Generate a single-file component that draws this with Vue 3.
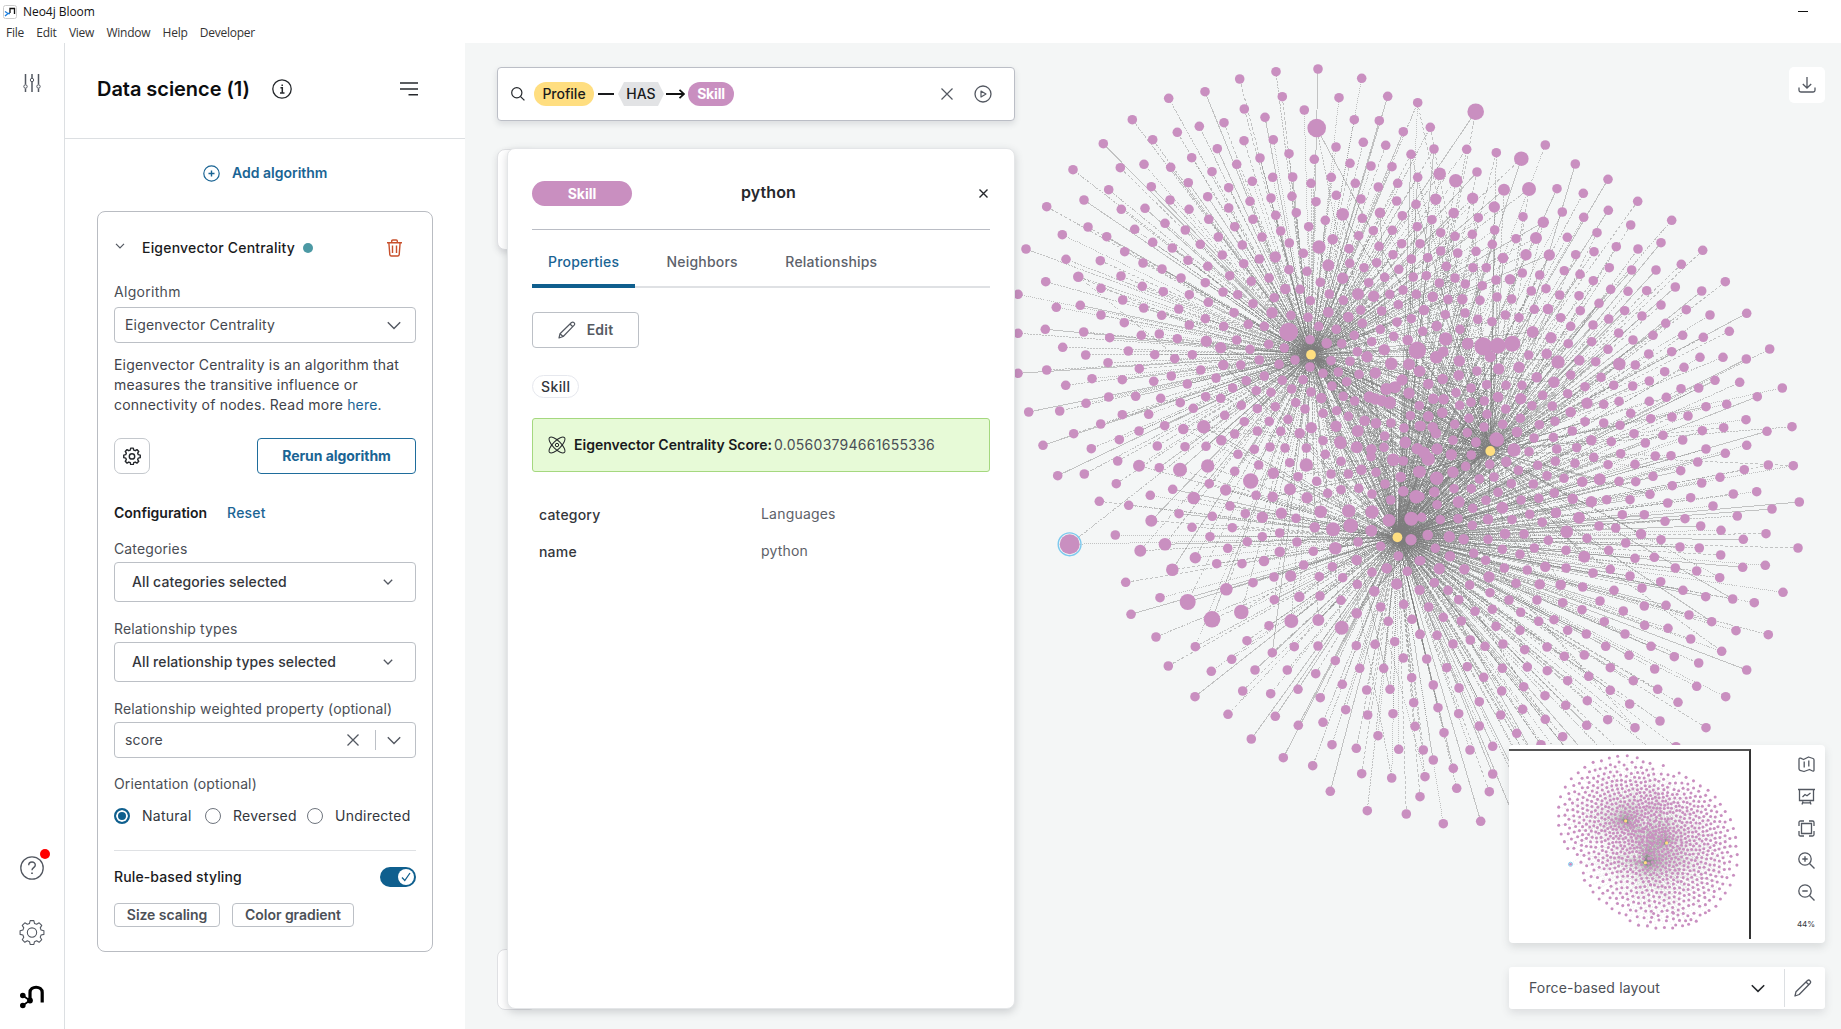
<script setup>
// Node positions, grouped by canvas region. Each region stores its origin and
// its nodes as "x y [radius]" in thirds of a pixel.
const regions = [
  {
    ox: 1010,
    oy: 50,
    nodes: `924 57,798 65,689 87,1055 85,585 125,476 145,817 140,987 143,1133 139,1223 158,703 177,883 180,765 202,367 209,642 218,1033 209,1108 212,568 229,502 247,920 234 28,1180 245,428 269,702 272,790 269,280 281,1060 277,1127 286,978 291,622 296,837 311,1203 313,545 323,750 324,913 328,331 353,402 343,482 352,680 343,1020 340,1083 348,1146 350,189 359,606 365,788 382,848 381,964 382,1223 382,727 394,535 398,903 400,1036 400,1163 400,424 410,296 419,656 413,1105 411,593 440,783 444,846 439,979 436,222 450,480 450,720 454,918 455,1053 447,1160 453,110 470,1218 463,405 475,334 478,656 474,537 478,797 496,859 488,1110 488 16,998 493 19,1177 497,1057 505,596 508,729 508,946 511,465 520,234 531,374 538,674 530,896 530,1222 530,526 540,812 543,1090 542,1147 541,157 554,290 560,756 561,625 561,1046 557,968 568 16,428 577,571 583,697 585,838 579,1107 589,927 591 20,1175 581,1230 581,48 597,487 594,344 605,1017 596,880 610,637 615,1149 614,796 621 17,168 628,271 632,534 631,748 627,1204 627,399 639,701 641,1019 640,1100 638,955 646 18,593 649,456 657,837 659,1062 653,1166 658,891 664,205 680 16,333 678,513 684,659 677,777 684,998 685 17,1124 682,1210 681,107 695,724 694,586 698,931 697,1076 698,397 709,273 715,826 717 16,460 725,639 726,870 718,1179 720,958 732,1044 732 18,24 733,538 734,683 734,793 743,1139 733,1091 739 17,1219 733,338 750,901 752,1000 751,595 757,729 761,139 772,211 766,401 774,506 777,1165 764,1052 780,1115 783,273 795,455 796,672 788,786 788 17,843 796,955 787 16,1015 801 16,894 802,1204 806,343 818,586 806,1161 816,538 825,641 829,715 823,763 829,926 829,1057 820,106 838,24 850,836 846 28,979 838,1111 838,221 846,394 856,448 852,299 863,502 866,1033 856,1151 859,589 874 17,680 870,776 883,900 869,950 880 16,995 881,1085 875,1193 870 16,632 893 17,158 892,720 898,823 894,1123 899 17,355 903,1042 905,1071 920 17,1222 901 26,227 915,434 914,494 926,547 914,748 930,855 930,963 932,1020 934,294 938,640 945 16,692 945,807 943,1144 941 19,1197 943 18,900 951,24 970,110 960,388 956,572 960,939 970,985 966,1047 973,1096 969 17,1228 964 17,484 978,763 978,246 986,337 989,431 994,618 984,709 992,817 991,879 989,1010 995,1176 990 17,532 1002,167 1006,966 1008,668 1014,739 1022,783 1027,845 1017,903 1026,1129 1017 18,1155 1012 18,1197 1030 17,296 1041,377 1039,452 1045,587 1040,632 1045,934 1044 16,1000 1039,1034 1053,1078 1041 17,1096 1047 17,1116 1052 17,1139 1058 19,228 1060,511 1058,857 1058,550 1075,694 1066,742 1076,796 1070,885 1077,1228 1067,56 1086,149 1083,337 1094,416 1093,644 1096,939 1090,980 1082,1015 1099,1201 1097,272 1122,703 1115,778 1114,834 1108,1064 1112 16,1098 1120 16,1143 1119,464 1127,520 1137 16,581 1130 20,742 1143,812 1144,904 1133 17,978 1129 17,1043 1143 18,1182 1134,1228 1128,191 1151,387 1143,674 1152,869 1150 16,1124 1158,328 1169,634 1171 16,939 1172,990 1176 18,1186 1175 16`
  },
  {
    ox: 1420,
    oy: 50,
    nodes: `167 185 25,31 232,42 297,140 298,229 308,376 285,304 326 22,466 342,171 366,59 371 19,564 388,107 392 20,252 419 18,327 417 21,411 416,490 430,653 454,158 445 17,47 448 17,223 471 17,101 489 16,427 486,565 481,175 503,309 500,491 502,36 509,755 511,370 517 17,632 525,62 548,224 540,157 553,531 548,105 559,442 562,288 566,348 564 18,217 583,723 578,589 590,62 603,168 604,522 605,654 597,848 601,113 609,318 614 17,388 615 17,467 614,23 623,249 624 16,784 643,79 649,159 653,199 653,568 653,433 662,635 660,708 660,19 677,307 669,480 673,359 675,105 684,228 690,270 688 16,520 692,916 695,58 699,136 702,187 707,378 716,334 723,572 718,766 711,624 724,680 722,845 723,38 740 16,84 748,127 748 16,180 751,231 741,275 747,419 735,477 737,537 760,723 765,12 780 16,343 778,384 777 16,799 779,481 782,614 782,76 794,135 789,256 795,297 803,422 803,566 807,666 798,870 795,980 790,173 808,216 815,519 825,737 820,50 828 16,452 829,120 838,8 844,338 846 18,928 844,596 849,699 856,788 856,850 862,393 863 17,639 870,77 867 20,143 881 18,190 889 27,233 887 24,277 881 24,445 881,515 875,211 920 17,49 922 19,70 905 16,564 898,1049 897,686 912,755 905,326 915,380 911 16,118 933 17,414 936 20,478 931 16,527 935,909 922,840 922,979 927,598 942 19,646 945,171 963,236 957 17,297 952 17,792 952,116 976 16,734 965,2 964,452 975,350 982 16,543 982,25 1002 16,68 987 16,200 1004,258 1006,306 1006,402 997 17,688 993,885 991,959 997,153 1014,581 1006,638 1008,495 1010,783 1016,836 1014,1087 1014,108 1028,443 1031,368 1036,1012 1040,234 1041 16,302 1046 17,40 1046 16,71 1048 16,153 1057,193 1053,739 1042,688 1054,597 1054,551 1063,501 1060 17,920 1063,119 1066,397 1068,336 1067,257 1077,858 1070,67 1088 16,201 1093,452 1086 16,632 1090,25 1099 16,147 1105,301 1105,692 1106,756 1101,804 1098,978 1109,495 1115,551 1119,405 1114,104 1123,600 1126,248 1123,358 1124,38 1132 16,192 1131,1116 1130,911 1133,1041 1144,847 1142,457 1143,48 1150 16,142 1148,291 1146 16,642 1151,729 1156,342 1164,400 1162,229 1168 21,99 1171,168 1176,514 1171 16,574 1175,788 1170,676 1179,2 1128 16`
  },
  {
    ox: 1010,
    oy: 440,
    nodes: `99 16,244 26,442 18,525 20,588 19,733 28,780 21,825 24,889 24,992 10 18,1040 22 18,1084 28 16,1122 22,1186 8 17,1222 26 17,684 43,946 43,1083 50,323 63,387 77 18,448 83,593 78 20,746 75,839 68,889 75 20,993 64,1150 59 19,1180 63,510 89 21,674 94,790 100 17,963 102,1015 102,1054 89 16,1098 97,1227 95 18,143 107,223 102,864 110,1172 111 16,722 123 23,920 124,319 131,598 131,1125 132,840 148 18,488 148,647 150 17,953 160,993 149,1046 145,1086 162,1180 154 16,421 166,738 166,788 170 16,551 174 19,891 173 17,1142 180,1218 170 20,268 184,356 196,660 198,1016 213 20,1086 216 20,932 215 19,507 221,706 221,814 220 17,607 229,757 232 17,858 235,424 242 18,1137 241 19,1204 236 21,546 262,667 263,914 262 16,969 268 21,1022 257 22,1084 272 18,316 285,600 290,757 290,809 279,179 313 30,465 313 19,712 305,861 306,1044 306,1203 299 17,391 332 18,653 325,809 335 16,910 334,976 325 19,1112 319,556 353 17,1165 348,620 371,696 371,762 363 16,1040 360 16,1228 362,487 389 19,881 375,967 380,1130 385 16,347 427,792 411,842 408 17,928 410,998 413,1086 397,1192 394,729 428,1042 433,1160 432 17,649 448 19,1093 454 16,1228 450,450 473,793 479,868 470 16,930 468,993 481,533 486 24,1181 493,1112 501,694 516 22,363 523,1040 520 16,606 538 25,844 543 21,925 540 18,1206 538,777 557,1135 544,995 563 21,438 591,711 602,1154 605,1230 583,556 620,853 620,924 618,1039 617,1095 613,787 638,665 658,976 662,1180 654,475 678,604 694,735 690,832 690,917 701,1049 685,1121 685,1205 713,698 753,997 733,864 748,1070 750,1140 748,782 761,555 770,931 773,1211 788,654 823,796 829,1007 809,1073 825,1149 821,865 856,939 847,1215 859,1104 887,724 897,966 914,1039 925,1166 928,820 953,908 977,1055 1001,1145 1014,961 1054,1072 1112,1189 1122`
  },
  {
    ox: 1420,
    oy: 440,
    nodes: `980 16,51 27 17,168 8,232 0 20,282 30 20,327 35,410 27,470 23,858 27,916 40,94 44 17,25 57 20,12 38 18,154 45,521 52,602 41,706 48,753 47,833 66,209 73,259 65 16,406 64,465 70,353 76,137 79,564 74,645 73,1045 75,1120 77,0 95 18,99 97 17,295 91,973 89,782 92,50 115 20,222 111,381 107,178 117,432 115,699 109,900 112,487 125 16,539 118 18,597 124,647 125,274 131,340 132,757 137,845 129,102 146,154 146,43 156 16,234 157,403 159,690 163,940 162,1010 155,0 170,116 186 18,198 181,303 180,356 175,458 176 16,514 185 17,560 179,630 179,812 173,743 189,879 198,1138 186,51 194,158 205,247 203 18,1056 207,408 218 16,329 223,607 224,673 224,952 228,5 232,61 239,114 236,204 238 16,276 239,477 233 18,795 236,367 247,735 244,537 258,842 258,587 264,157 256,903 271,440 275 19,255 281 16,312 282,663 282 16,23 285 16,88 290 17,131 298 16,204 298,385 301,501 295,1038 281,723 299,970 298,617 309,1134 324,46 325,247 328,343 324,438 331,566 331,780 321,838 324,300 343,90 349 16,161 340,493 350 18,902 345,703 352,645 355,2 362,197 361,1036 376,968 382,766 384,58 386 17,133 388 16,253 384,322 390,376 380 16,438 384,571 388,830 393,519 399,207 411 17,630 408,899 413,43 428,722 425,149 435,288 430,359 433 16,422 434 16,488 441,84 451,666 444,582 451,789 451,0 450,210 458,1089 457,857 470,116 479,267 480,351 480,540 483,428 488,938 477,1003 488,26 501,217 508,486 509,673 498,738 496,610 513,165 514,302 517,70 532,807 525,124 543,356 544,402 539,553 545,875 545,228 559,674 556,744 565,443 571,948 572,300 571,1045 584,0 583,51 586,499 582,615 582,812 597,151 600,99 612,249 612,195 619,381 621,557 619,693 619,314 629,905 634,20 657,433 649,493 645,627 646,763 650,836 669,80 683,142 680,247 685,322 681,571 683,704 687,980 690,382 692,191 712,506 709,443 722,640 722,40 735,117 744,311 740,830 739,713 748,245 753,571 751,375 767,502 782,917 770,178 785,774 787,437 796,629 792,54 803,308 808,116 821,242 825,376 838,563 839,720 843,178 858,500 856,645 863,858 863,72 878,290 880,428 890,10 930,150 930,218 919,363 914,768 920,290 942,218 1002,110 1045,208 1055,70 1151,182 1144,15 1010,0 1070,40 960,100 985`
  },
  {
    // Rows that sit below the overview card
    ox: 1510,
    oy: 750,
    nodes: `30 25,90 50,160 30,220 60,300 25,380 50,450 20,30 100,110 120,190 125,260 110,330 130,60 180,150 190,230 170,20 220`
  }
]

const hubs = [
  { x: 1311, y: 354.7 },
  { x: 1490.3, y: 451 },
  { x: 1397.4, y: 537.3 }
]

const nodes = []
for (const region of regions) {
  for (const entry of region.nodes.split(',')) {
    const parts = entry.trim().split(' ').map(Number)
    nodes.push({
      x: +(region.ox + parts[0] / 3).toFixed(1),
      y: +(region.oy + parts[1] / 3).toFixed(1),
      r: +((parts[2] || 14.4) / 3).toFixed(1)
    })
  }
}

function hubsFor(node, i) {
  const h = (i * 7919) % 100
  if (node.r > 5.2) {
    if (node.x < 1240 && node.y > 430) return [0, 2]
    if (node.x > 1400 && node.y < 330) return h < 50 ? [0, 1] : [0, 2]
    return h < 60 ? [0, 1, 2] : [1, 2]
  }
  const dx = node.x - 1311
  const dy = node.y - 355
  if (dx < 0 && dy < 110 + dx * -0.12) return [0]
  if (dy < 0 && dx < 95) return [0]
  if (node.y > 545 || node.x < 1330) return h < 8 ? [2, 0] : [2]
  if (node.x > 1500) return node.y > 430 ? (h < 12 ? [1, 2] : [2]) : h < 45 ? [1] : [2]
  return h < 40 ? [0, 2] : h < 60 ? [1, 2] : h < 75 ? [0, 1, 2] : [0, 1]
}

const patterns = [[], [], [], []]
nodes.forEach((node, i) => {
  for (const k of hubsFor(node, i)) {
    patterns[(i + k) % 4].push({ a: node, b: hubs[k] })
  }
})
const dashes = ['none', '2 1', '3 2', '1 1']
const edgeLayers = patterns.map((edges, i) => ({ edges, dash: dashes[i] }))
const miniPath = patterns
  .flat()
  .map((e) => `M${e.a.x} ${e.a.y}L${e.b.x} ${e.b.y}`)
  .join('')

const menus = ['File', 'Edit', 'View', 'Window', 'Help', 'Developer']
const orientations = ['Natural', 'Reversed', 'Undirected']
const gearPath =
  'M10.3 1.5h3.4l.6 2.6 2 .8 2.3-1.4 2.4 2.4-1.4 2.3.8 2 2.6.6v3.4l-2.6.6-.8 2 1.4 2.3-2.4 2.4-2.3-1.4-2 .8-.6 2.6h-3.4l-.6-2.6-2-.8-2.3 1.4L3 19.100l1.400-2.300-.8-2L1 14.200v-3.400l2.600-.6.8-2L3 5.900l2.400-2.400 2.300 1.400 2-.8z'
</script>

<template>
  <div class="window">
    <header class="chrome">
      <div class="titlebar">
        <svg class="app-icon" viewBox="0 0 14 14">
          <rect x=".5" y=".5" width="13" height="13" rx="2" fill="#fff" stroke="#ccc" />
          <path d="M7 8V3.500h4.500V9" fill="none" stroke="#111" stroke-width="1.300" />
          <path d="M2 6.500l3 2-3 2.500M4.500 8.500H7" fill="none" stroke="#1b7fe0" stroke-width="1.300" />
        </svg>
        <span>Neo4j Bloom</span>
        <i class="minimise"></i>
      </div>
      <nav class="menubar"><span v-for="m in menus" :key="m">{{ m }}</span></nav>
    </header>

    <div class="body">
      <aside class="rail">
        <svg class="ic sliders" width="18" height="20" viewBox="0 0 18 20">
          <path d="M2.500 1v10.500M2.500 15.500V19M9 1v4M9 9v10M15.500 1v10.500M15.500 15.500V19" stroke-width="1.500" />
          <circle cx="2.500" cy="13.500" r="1.700" /><circle cx="9" cy="7" r="1.700" /><circle cx="15.500" cy="13.500" r="1.700" />
        </svg>
        <div class="help">
          <svg class="ic" width="24" height="24" viewBox="0 0 24 24">
            <circle cx="12" cy="12" r="11.200" stroke-width="1.300" />
            <path d="M8.700 9.300C8.700 5 15.300 5 15.300 9c0 2.700-3.300 2.600-3.300 5.300" stroke-width="1.400" />
            <path d="M12 16.400v1.600" stroke-width="1.700" />
          </svg>
          <i class="alert"></i>
        </div>
        <svg class="ic rail-gear" width="26" height="26" viewBox="0 0 24 24">
          <path :d="gearPath" stroke-width="1" stroke-linejoin="round" /><circle cx="12" cy="12.500" r="4.300" stroke-width="1" />
        </svg>
        <svg class="logo" width="24" height="24" viewBox="0 0 24 24">
          <path d="M10 15V7.500C10 .5 22.200.5 22.200 7.500V17.500" fill="none" stroke="#000" stroke-width="3.200" />
          <path d="M2.800 10.500l7 5-7 5" fill="none" stroke="#000" stroke-width="1.800" />
          <circle cx="2.800" cy="10.500" r="2.800" /><circle cx="2.800" cy="20.500" r="2.800" /><circle cx="10" cy="15.500" r="2.900" />
        </svg>
      </aside>

      <section class="sidebar">
        <div class="side-head">
          <h1>Data science (1)</h1>
          <svg class="ic dark info" width="20" height="20" viewBox="0 0 20 20">
            <circle cx="10" cy="10" r="9.200" stroke-width="1.300" />
            <path d="M8.500 8.800h1.800V14M8 14h4.500M10.200 5.500v1.600" stroke-width="1.500" />
          </svg>
          <svg class="ic dark lines" width="18" height="14" viewBox="0 0 18 14">
            <path d="M0 1h18M0 7h18M8.500 12.800H18" stroke-width="1.500" />
          </svg>
        </div>

        <button class="add">
          <svg class="ic" width="17" height="17" viewBox="0 0 17 17">
            <circle cx="8.500" cy="8.500" r="7.700" stroke-width="1.200" /><path d="M8.500 5.500v6M5.500 8.500h6" stroke-width="1.400" />
          </svg>
          <span>Add algorithm</span>
        </button>

        <article class="card">
          <div class="card-head">
            <svg class="ic" width="10" height="6" viewBox="0 0 10 6"><path d="M1 .8l4 4 4-4" stroke-width="1.200" /></svg>
            <strong>Eigenvector Centrality</strong>
            <i class="status"></i>
            <svg class="trash" width="15" height="18" viewBox="0 0 15 18">
              <path d="M0 3.700h15M4.700 3.500V2Q4.700 1 5.800 1h3.400q1.100 0 1.100 1v1.500M1.900 4l.9 11.600q.2 1.400 1.500 1.400h6.400q1.300 0 1.500-1.400L13.100 4M5.500 6.500V14M9.500 6.500V14" />
            </svg>
          </div>

          <label class="lbl first">Algorithm</label>
          <div class="select">
            <span>Eigenvector Centrality</span>
            <svg class="ic" width="14" height="9" viewBox="0 0 14 9"><path d="M.8 1.200L7 7.400l6.200-6.200" stroke-width="1.400" /></svg>
          </div>
          <p class="desc">Eigenvector Centrality is an algorithm that<br />measures the transitive influence or<br />connectivity of nodes. Read more <a>here</a>.</p>

          <div class="actions">
            <button class="gear-btn">
              <svg class="ic dark" width="18" height="18" viewBox="0 0 24 24">
                <path :d="gearPath" stroke-width="1.900" stroke-linejoin="round" /><circle cx="12" cy="12.500" r="3.600" stroke-width="1.900" />
              </svg>
            </button>
            <button class="rerun">Rerun algorithm</button>
          </div>

          <div class="config"><strong>Configuration</strong><a>Reset</a></div>

          <label class="lbl cat">Categories</label>
          <div class="dropdown">
            <span>All categories selected</span>
            <svg class="ic" width="10" height="6" viewBox="0 0 10 6"><path d="M.8.8L5 5 9.200.8" stroke-width="1.300" /></svg>
          </div>
          <label class="lbl">Relationship types</label>
          <div class="dropdown">
            <span>All relationship types selected</span>
            <svg class="ic" width="10" height="6" viewBox="0 0 10 6"><path d="M.8.8L5 5 9.200.8" stroke-width="1.300" /></svg>
          </div>
          <label class="lbl">Relationship weighted property (optional)</label>
          <div class="select">
            <span>score</span>
            <svg class="ic" width="12" height="12" viewBox="0 0 12 12"><path d="M.5.5l11 11M11.500.5l-11 11" stroke-width="1.300" /></svg>
            <i class="bar"></i>
            <svg class="ic" width="14" height="9" viewBox="0 0 14 9"><path d="M.8 1.200L7 7.400l6.200-6.200" stroke-width="1.400" /></svg>
          </div>

          <label class="lbl orient">Orientation (optional)</label>
          <div class="radios">
            <span v-for="(o, i) in orientations" :key="o" class="radio" :class="{ on: i === 0 }"><i></i>{{ o }}</span>
          </div>

          <div class="rule-row">
            <strong>Rule-based styling</strong>
            <div class="toggle">
              <b><svg width="10" height="10" viewBox="0 0 10 10"><path d="M1 5.500l2.800 3L9 1" /></svg></b>
            </div>
          </div>
          <div class="chips"><span class="chip size">Size scaling</span><span class="chip">Color gradient</span></div>
        </article>
      </section>

      <main class="canvas">
        <svg class="graph" width="1376" height="986" viewBox="465 43 1376 986">
          <g v-for="(layer, i) in edgeLayers" :key="i" class="edges" :stroke-dasharray="layer.dash">
            <line v-for="(e, j) in layer.edges" :key="j" :x1="e.a.x" :y1="e.a.y" :x2="e.b.x" :y2="e.b.y" />
          </g>
          <g class="nodes"><circle v-for="(n, i) in nodes" :key="i" :cx="n.x" :cy="n.y" :r="n.r" /></g>
          <circle cx="1069.600" cy="544.300" r="11.400" class="ring" />
          <circle v-for="h in hubs" :key="h.x" :cx="h.x" :cy="h.y" r="4.900" class="hub" />
        </svg>

        <div class="left-col">
          <div class="search">
            <svg class="ic dark" width="14" height="14" viewBox="0 0 14 14"><circle cx="5.800" cy="5.800" r="5.100" stroke-width="1.200" /><path d="M9.600 9.600l3.800 3.800" stroke-width="1.300" /></svg>
            <span class="pill profile">Profile</span>
            <i class="dash"></i>
            <span class="hex">HAS</span>
            <svg class="arrow" width="19" height="10" viewBox="0 0 19 10"><path d="M0 5h18M13.500.8L18 5l-4.500 4.200" /></svg>
            <span class="pill skill">Skill</span>
            <svg class="ic clear" width="12" height="12" viewBox="0 0 12 12"><path d="M.5.5l11 11M11.500.5l-11 11" stroke-width="1.200" /></svg>
            <svg class="ic play" width="18" height="18" viewBox="0 0 18 18"><circle cx="9" cy="9" r="8" stroke-width="1.300" /><path d="M7 6l5 3-5 3z" stroke-width="1.200" stroke-linejoin="round" /></svg>
          </div>

          <div class="stack">
            <div class="sheet top"></div>
            <div class="sheet bottom"></div>
            <section class="inspector">
              <div class="ins-head">
                <span class="badge">Skill</span>
                <h2>python</h2>
                <svg class="ic dark" width="9" height="9" viewBox="0 0 9 9"><path d="M.5.5l8 8M8.500.5l-8 8" stroke-width="1.400" /></svg>
              </div>
              <div class="tabs">
                <span class="tab active">Properties</span><span class="tab">Neighbors</span><span class="tab">Relationships</span>
              </div>
              <button class="edit">
                <svg class="ic" width="18" height="18" viewBox="0 0 18 18"><path d="M1 17l1-4.300L13.500 1.500q1.400-1 2.500.2 1.200 1.200.2 2.500L5.200 15.500zM12 3l3 3M2 12.700l3 2.800" stroke-width="1.200" stroke-linejoin="round" /></svg>
                <span>Edit</span>
              </button>
              <span class="tag">Skill</span>
              <div class="score">
                <svg class="ic dark" width="18" height="18" viewBox="0 0 18 18" stroke-width="1">
                  <ellipse cx="9" cy="9" rx="10.500" ry="4" transform="rotate(45 9 9)" /><ellipse cx="9" cy="9" rx="10.500" ry="4" transform="rotate(-45 9 9)" /><circle cx="9" cy="9" r="1.700" />
                </svg>
                <strong>Eigenvector Centrality Score:</strong><span>0.05603794661655336</span>
              </div>
              <dl>
                <dt>category</dt><dd>Languages</dd>
                <dt>name</dt><dd>python</dd>
              </dl>
            </section>
          </div>
        </div>

        <div class="right-col">
          <button class="download">
            <svg class="ic" width="18" height="18" viewBox="0 0 18 18"><path d="M9 1v11M4.800 8l4.200 4 4.200-4M1 11.500v2.700q0 1.800 1.800 1.800h12.400q1.800 0 1.800-1.800v-2.700" stroke-width="1.300" /></svg>
          </button>

          <div class="overview">
            <svg class="mini" viewBox="800.500 48.600 1050.300 822.800">
              <path :d="miniPath" class="mini-edges" />
              <g class="nodes"><circle v-for="(n, i) in nodes" :key="i" :cx="n.x" :cy="n.y" r="6.700" /></g>
              <circle cx="1069.600" cy="544.300" r="9" class="mini-ring" />
              <circle v-for="h in hubs" :key="h.x" :cx="h.x" :cy="h.y" r="7" class="hub" />
            </svg>
            <div class="tools">
              <svg class="ic" width="17" height="17" viewBox="0 0 17 17"><path d="M1 3.500q0-1.800 1.700-1.300L5.500 3.500l5-2.500L15 2.500q1 .4 1 1.500v10q0 1.500-1.500 1l-3-1.500-5.500 2L2 14.300q-1-.3-1-1.500zM6.200 5.500v6M10.800 4.500v6" stroke-width="1.300" stroke-linejoin="round" /></svg>
              <svg class="ic" width="17" height="17" viewBox="0 0 17 17"><path d="M0 1.500h17M1.500 1.500V12.500h14V1.500M5 13.500L4 16.500M12 13.500l1 3M4.500 14.800h8M4.500 9L7 6.500l2 1.200L12.500 5" stroke-width="1.300" /></svg>
              <svg class="ic" width="17" height="17" viewBox="0 0 17 17"><path d="M3.500 3.500h10v10h-10zM1 6V2.500Q1 1 2.500 1H6M11 1h3.500Q16 1 16 2.500V6M16 11v3.500q0 1.500-1.500 1.500H11M6 16H2.500Q1 16 1 14.500V11" stroke-width="1.300" /></svg>
              <svg class="ic" width="17" height="17" viewBox="0 0 17 17"><circle cx="7" cy="7" r="6.200" stroke-width="1.300" /><path d="M11.500 11.500l5 5M7 4.300v5.400M4.300 7h5.400" stroke-width="1.400" /></svg>
              <svg class="ic" width="17" height="17" viewBox="0 0 17 17"><circle cx="7" cy="7" r="6.200" stroke-width="1.300" /><path d="M11.500 11.500l5 5M4.300 7h5.400" stroke-width="1.400" /></svg>
              <span>44%</span>
            </div>
          </div>

          <div class="layout-bar">
            <span>Force-based layout</span>
            <svg class="ic dark" width="14" height="9" viewBox="0 0 14 9"><path d="M.8 1.200L7 7.400l6.200-6.200" stroke-width="1.600" /></svg>
            <div class="pencil">
              <svg class="ic" width="18" height="18" viewBox="0 0 18 18"><path d="M1 17l1-4.300L13.500 1.500q1.400-1 2.500.2 1.200 1.200.2 2.500L5.200 15.500zM12 3l3 3" stroke-width="1.300" stroke-linejoin="round" /></svg>
            </div>
          </div>
        </div>
      </main>
    </div>
  </div>
</template>

<style>
body { margin: 0; overflow: hidden; }
</style>

<style scoped>
.window { width: 1841px; height: 1029px; display: flex; flex-direction: column; background: #fff; font: 14px/20px Inter, "Open Sans", sans-serif; letter-spacing: .2px; color: #33373d; box-sizing: border-box; overflow: hidden; }
.window * { box-sizing: border-box; }
button { font: inherit; letter-spacing: inherit; background: #fff; padding: 0; }
h1, h2, p, dl, dd { margin: 0; }
strong { font-weight: 500; color: #1a1b1d; }
a { color: #1a6494; }
.ic { fill: none; stroke: #535861; flex: none; }
.ic.dark { stroke: #25282c; }

.chrome { height: 43px; flex: none; font-family: "Open Sans", "Noto Sans", sans-serif; letter-spacing: 0; color: #111; }
.titlebar { height: 23px; display: flex; align-items: center; padding-left: 3px; font-size: 12px; letter-spacing: -.05px; }
.app-icon { width: 14px; height: 14px; margin-right: 6px; }
.minimise { width: 10px; height: 1px; background: #111; margin: 0 33px 0 auto; }
.menubar { display: flex; gap: 12.300px; padding-left: 6px; height: 20px; align-items: center; font-size: 12px; letter-spacing: -.25px; color: #333; }

.body { flex: 1; display: flex; min-height: 0; }
.rail { width: 65px; flex: none; border-right: 1px solid #dcdfe2; display: flex; flex-direction: column; align-items: center; padding-top: 30px; padding-bottom: 20px; }
.sliders { margin-bottom: auto; }
.help { position: relative; height: 24px; margin-bottom: 39px; }
.alert { position: absolute; left: 20px; top: -7px; width: 10px; height: 10px; border-radius: 50%; background: #f00; }
.rail-gear { margin-bottom: 40px; }

.sidebar { width: 400px; flex: none; }
.side-head { height: 96px; border-bottom: 1px solid #dcdfe2; display: flex; align-items: center; padding: 0 47px 3px 32px; }
h1 { font-size: 20px; line-height: 28px; font-weight: 600; color: #0c0d0e; letter-spacing: -.05px; width: 175px; white-space: nowrap; }
.lines { margin-left: auto; }
.add { border: 0; display: flex; align-items: center; gap: 12px; margin: 24px auto 28px 138px; color: #1a6494; font-weight: 600; letter-spacing: 0; }
.add .ic { stroke: #1a6494; }
.card { width: 336px; height: 741px; margin-left: 32px; border: 1px solid #b9bcc2; border-radius: 8px; padding: 0 16px; }
.card-head { height: 72px; display: flex; align-items: center; padding-left: 1px; }
.card-head > svg:first-child { margin: -4px 17px 0 0; }
.status { width: 10px; height: 10px; border-radius: 50%; background: #4c99a4; margin-left: 8px; }
.trash { margin: 0 14px 0 auto; fill: none; stroke: #c8502c; stroke-width: 1.400; }
.lbl { display: block; height: 20px; margin: 17px 0 3px; color: #4a4e55; white-space: nowrap; letter-spacing: .13px; }
.lbl.first { margin: -2px 0 5px; letter-spacing: .3px; }
.lbl.cat { margin-top: 16px; }
.select { height: 36px; border: 1px solid #bcc0c6; border-radius: 4px; padding: 0 14px 0 10px; display: flex; align-items: center; letter-spacing: .17px; }
.select span { flex: 1; color: #43474e; }
.bar { width: 1px; height: 20px; background: #bcc0c6; margin: 0 11px 0 16px; }
.select .bar { flex: none; }
.desc { margin-top: 12px; white-space: nowrap; color: #3f434a; }
.actions { display: flex; justify-content: space-between; margin: 23px 0 29px; height: 36px; }
.gear-btn { width: 36px; border: 1px solid #c4c8cd; border-radius: 7px; display: grid; place-items: center; }
.rerun { width: 159px; border: 1px solid #1f6d9c; border-radius: 4px; color: #1a6494; font-weight: 700; letter-spacing: -.05px; }
.config { display: flex; gap: 20px; height: 20px; }
.config strong { font-weight: 600; letter-spacing: 0; }
.config a { font-weight: 500; }
.dropdown { height: 40px; border: 1px solid #bcc0c6; border-radius: 4px; padding: 0 22px 0 17px; display: flex; align-items: center; justify-content: space-between; font-weight: 500; letter-spacing: .1px; color: #33363b; }
.radios { display: flex; height: 20px; margin-top: 12px; letter-spacing: .25px; }
.orient { margin-top: 16px; }
.radio { display: flex; align-items: center; }
.radio i { width: 16px; height: 16px; border: 1px solid #6f757e; border-radius: 50%; margin-right: 12px; flex: none; }
.radio:nth-child(1) { width: 91px; }
.radio:nth-child(2) { width: 102px; }
.radio.on i { border: 2px solid #0f5f8e; background: #0f5f8e; box-shadow: inset 0 0 0 2px #fff; }
.rule-row { margin-top: 24px; border-top: 1px solid #dfe1e4; padding-top: 16px; height: 53px; display: flex; justify-content: space-between; align-items: flex-start; letter-spacing: .13px; }
.toggle { width: 36px; height: 20px; border-radius: 10px; background: #0f5f8e; display: flex; justify-content: flex-end; padding: 2px; }
.toggle b { width: 16px; height: 16px; background: #fff; border-radius: 50%; display: grid; place-items: center; }
.toggle path { fill: none; stroke: #0f5f8e; stroke-width: 1.300; }
.chips { display: flex; gap: 12px; }
.chip { height: 24px; width: 122px; border: 1px solid #bcc0c6; border-radius: 4px; font-weight: 600; line-height: 22px; text-align: center; color: #4c5057; letter-spacing: -.05px; }
.chip.size { width: 106px; }

.canvas { flex: 1; position: relative; background: #f4f6f6; display: flex; justify-content: space-between; padding: 24px 16px 20px 32px; }
.graph { position: absolute; left: 0; top: 0; }
.edges { stroke: #7c7c7c; stroke-opacity: .42; stroke-width: 1; shape-rendering: crispEdges; }
.nodes { fill: #c98fc0; }
.hub { fill: #ffde80; }
.ring { fill: none; stroke: #7cc9ee; stroke-width: 1.400; }

.left-col { width: 518px; position: relative; display: flex; flex-direction: column; gap: 27px; }
.search { height: 54px; background: #fff; border: 1px solid #bbbec6; border-radius: 4px; box-shadow: 0 3px 6px rgba(60, 65, 75, .14); display: flex; align-items: center; padding: 0 21px 0 13px; font-weight: 500; letter-spacing: 0; color: #1a1b1d; }
.pill { height: 24px; line-height: 24px; border-radius: 12px; text-align: center; }
.profile { width: 60px; background: #ffde80; margin-left: 9px; }
.dash { width: 16px; height: 2px; background: #1a1b1d; margin: 0 4px; }
.hex { width: 46px; height: 24px; line-height: 24px; text-align: center; background: #e2e3e5; clip-path: polygon(6px 0, 40px 0, 46px 50%, 40px 100%, 6px 100%, 0 50%); }
.arrow { margin: 0 3px 0 2px; fill: none; stroke: #111; stroke-width: 1.800; }
.skill { width: 46px; background: #c98fc0; color: #fff; font-weight: 700; letter-spacing: -.2px; }
.clear { margin-left: auto; }
.play { margin-left: 21px; margin-right: 1px; }
.stack { flex: 1; position: relative; display: flex; padding-left: 10px; }
.sheet { position: absolute; left: 0; width: 40px; background: #fff; border: 1px solid #dfe0e3; border-radius: 8px; }
.sheet.top { top: 1px; height: 101px; box-shadow: 0 3px 6px rgba(60, 65, 75, .16); }
.sheet.bottom { bottom: -1px; height: 61px; }
.inspector { position: relative; flex: 1; background: #fff; border: 1px solid #e4e6e8; border-radius: 8px; box-shadow: 0 3px 9px rgba(60, 65, 75, .22); padding: 0 24px; display: flex; flex-direction: column; align-items: flex-start; }
.ins-head { width: 100%; height: 81px; border-bottom: 1px solid #babdc5; display: flex; align-items: center; padding: 8px 2px 0 0; }
.badge { width: 100px; height: 25px; line-height: 26px; border-radius: 12.500px; background: #c98fc0; color: #fff; font-weight: 700; text-align: center; letter-spacing: 0; }
h2 { flex: 1; font-size: 16px; font-weight: 600; color: #26282c; margin: -2px 0 0 109px; letter-spacing: .1px; }
.tabs { width: 100%; height: 58px; border-bottom: 2px solid #dfe1e4; display: flex; font-weight: 500; color: #5d626b; }
.tab { height: 58px; line-height: 63px; padding: 0 16px; margin-right: 15.500px; }
.tab.active { width: 103px; color: #1a6494; border-bottom: 4px solid #0f5f8e; border-radius: 3px 3px 0 0; }
.edit { width: 107px; height: 36px; margin-top: 24px; border: 1px solid #bcc0c6; border-radius: 4px; display: flex; align-items: center; justify-content: center; gap: 11px; font-weight: 600; color: #555a62; }
.tag { height: 23px; margin-top: 27px; line-height: 21px; border: 1px solid #e6e8ee; border-radius: 12px; padding: 0 8px; font-weight: 500; letter-spacing: .4px; }
.score { width: 100%; height: 54px; margin-top: 20px; background: #e7fad7; border: 1px solid #a5d87f; border-radius: 3px; display: flex; align-items: center; padding-left: 15px; letter-spacing: 0; white-space: nowrap; color: #4a4e55; }
.score strong { font-weight: 600; margin: 0 2px 0 8px; }
.score span { letter-spacing: .27px; }
dl { display: grid; grid-template-columns: 222px 1fr; row-gap: 16px; margin: 32px 0 0 7px; color: #5d6168; }
dt { font-weight: 500; color: #33363b; padding-top: 1px; }

.right-col { position: relative; width: 316px; display: flex; flex-direction: column; align-items: flex-end; }
.download { width: 36px; height: 36px; border: 0; border-radius: 5px; display: grid; place-items: center; margin-bottom: auto; }
.overview { width: 316px; height: 198px; background: #fff; border-radius: 4px; box-shadow: 0 4px 9px rgba(60, 65, 75, .15); display: flex; justify-content: space-between; padding: 4px 10px 0 0; margin-bottom: 24px; }
.mini { width: 242px; height: 190px; border-top: 2px solid #555; border-right: 2px solid #333; }
.mini-edges { fill: none; stroke: #888; stroke-opacity: .3; stroke-width: 2; stroke-dasharray: 6 7; }
.mini-ring { fill: none; stroke: #7cc9ee; stroke-width: 4; }
.tools { width: 18px; display: flex; flex-direction: column; align-items: center; gap: 15px; padding-top: 6.500px; font-size: 8px; letter-spacing: -.1px; }
.tools span { line-height: 17px; }
.layout-bar { width: 316px; height: 42px; background: #fff; border-radius: 3px; box-shadow: 0 4px 9px rgba(60, 65, 75, .13); display: flex; align-items: center; padding-left: 20px; color: #4c5057; }
.layout-bar > span { flex: 1; letter-spacing: .15px; }
.pencil { width: 41px; height: 38px; border-left: 1px solid #dcdfe2; margin-left: 19px; padding-right: 4px; display: grid; place-items: center; }
</style>
